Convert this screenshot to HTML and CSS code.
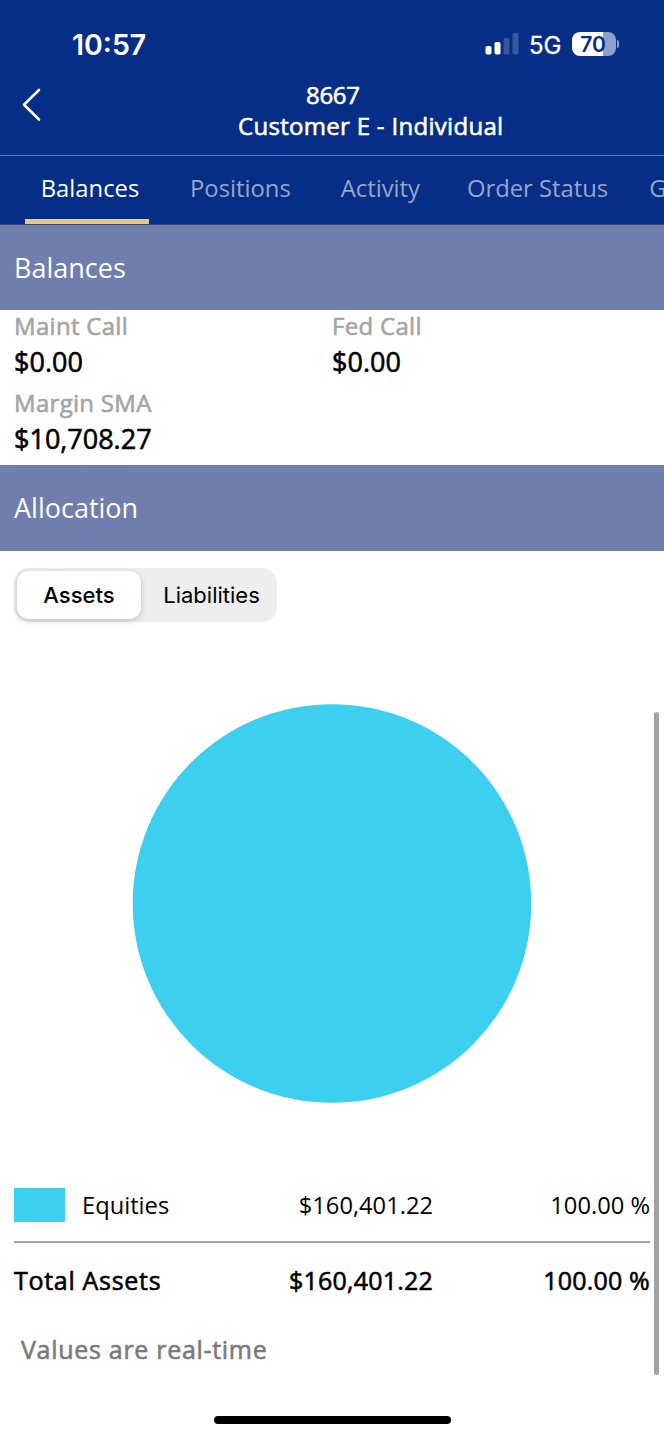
FILE: index.html
```
<!DOCTYPE html>
<html lang="en">
  <head>
    <meta charset="UTF-8" />
    <meta name="viewport" content="width=device-width, initial-scale=1.0" />
    <title>Account Balances</title>
    <link rel="stylesheet" href="styles.css">
  </head>
  <body>
    <div class="screen">
      <div class="status-bar">
        <span class="time">10:57</span>
        <div class="status-icons">
          <svg class="signal" width="34" height="22" viewBox="0 0 34 22" fill="#fff">
            <rect x="0.5" y="13" width="6" height="8.5" rx="1.8" />
            <rect x="9.5" y="9" width="6" height="12.5" rx="1.8" />
            <rect x="18.5" y="5" width="6" height="16.5" rx="1.8" opacity="0.2" />
            <rect x="27.5" y="0" width="6" height="21.5" rx="1.8" opacity="0.2" />
          </svg>
          <span class="network">5G</span>
          <div class="battery">
            <span class="battery-level">70</span>
          </div>
          <span class="battery-tip"></span>
        </div>
      </div>

      <header class="header">
        <svg class="back" width="20" height="34" viewBox="0 0 20 34" fill="none" stroke="#fff" stroke-width="2.6" stroke-linecap="round" stroke-linejoin="round">
          <path d="M17 2 L2 16.7 L17 31.5" />
        </svg>
        <div class="title">
          <div class="account">8667</div>
          <div class="customer">Customer E - Individual</div>
        </div>
      </header>

      <nav class="tabs">
        <a class="tab active">Balances</a>
        <a class="tab positions">Positions</a>
        <a class="tab activity">Activity</a>
        <a class="tab orders">Order Status</a>
        <a class="tab">G</a>
      </nav>

      <h2 class="section-title">Balances</h2>
      <div class="balances">
        <div class="balance">
          <div class="label">Maint Call</div>
          <div class="value">$0.00</div>
        </div>
        <div class="balance">
          <div class="label">Fed Call</div>
          <div class="value">$0.00</div>
        </div>
        <div class="balance">
          <div class="label">Margin SMA</div>
          <div class="value">$10,708.27</div>
        </div>
      </div>

      <h2 class="section-title allocation-title">Allocation</h2>
      <div class="allocation">
        <div class="segmented">
          <button class="segment selected">Assets</button>
          <button class="segment">Liabilities</button>
        </div>

        <svg class="chart" width="400" height="400" viewBox="0 0 400 400">
          <circle cx="200" cy="199.5" r="199.3" fill="#3dcff0" />
        </svg>

        <div class="row">
          <span class="name"><i class="swatch"></i>Equities</span>
          <span class="amount">$160,401.22</span>
          <span class="percent">100.00 %</span>
        </div>
        <div class="row total">
          <span class="name">Total Assets</span>
          <span class="amount">$160,401.22</span>
          <span class="percent">100.00 %</span>
        </div>
        <p class="note">Values are real-time</p>
      </div>

      <div class="scrollbar"></div>
      <div class="home-indicator"></div>
    </div>
  </body>
</html>
```
FILE: styles.css
```
* {
  margin: 0;
  padding: 0;
  box-sizing: border-box;
}

body {
  background: #fff;
  font-family: "Open Sans", sans-serif;
  color: #000;
}

.screen {
  position: relative;
  width: 664px;
  height: 1440px;
  overflow: hidden;
  display: flex;
  flex-direction: column;
  white-space: nowrap;
}

/* status bar */
.status-bar {
  height: 76px;
  padding: 12px 45px 0 72px;
  display: flex;
  justify-content: space-between;
  align-items: center;
  background: #062e87;
  color: #fff;
  font-family: Inter, sans-serif;
}

.time {
  font-size: 28.5px;
  font-weight: 600;
}

.status-icons {
  display: flex;
  align-items: center;
}

.network {
  margin-left: 10px;
  padding-top: 2px;
  width: 33px;
  font-size: 24px;
  font-weight: 400;
  -webkit-text-stroke: 0.3px #fff;
}

.battery {
  margin-left: 10px;
  width: 44px;
  height: 24px;
  border-radius: 8px;
  background: linear-gradient(to right, #fff 70%, #8d9fca 70%);
  text-align: center;
}

.battery-level {
  display: block;
  padding-right: 2px;
  line-height: 25px;
  font-size: 21px;
  font-weight: 600;
  color: #062e87;
}

.battery-tip {
  margin-left: 1px;
  width: 2px;
  height: 8px;
  border-radius: 0 3px 3px 0;
  background: #8d9fca;
}

/* header */
.header {
  height: 80px;
  padding: 3px 22px 0;
  display: flex;
  background: #062e87;
  border-bottom: 1px solid #6077b1;
  color: #fff;
}

.back {
  margin-top: 9px;
}

/* medium weight: regular face with a thin outline */
.title,
.label,
.value,
.total,
.note {
  font-weight: 400;
  -webkit-text-stroke: 0.6px currentColor;
}

.title {
  margin-left: 196px;
  font-size: 24px;
  letter-spacing: 0.3px;
  line-height: 31px;
}

.account {
  padding-left: 68px;
  letter-spacing: -0.3px;
}

/* tabs */
.tabs {
  height: 69px;
  padding-left: 25px;
  display: flex;
  background: #062e87;
  border-bottom: 1px solid #34466f;
  flex-shrink: 0;
}

.tab {
  flex-shrink: 0;
  padding-top: 15px;
  font-size: 23.8px;
  line-height: 34px;
  color: #98a5c9;
}

.tab.active {
  width: 124px;
  margin-right: 41px;
  padding-left: 6px;
  border-bottom: 5px solid #e9c77b;
  text-align: center;
  color: #fff;
}

.positions {
  margin-right: 50px;
}

.activity {
  margin-right: 47px;
}

.orders {
  margin-right: 41px;
}

/* sections */
.section-title {
  height: 85px;
  padding-left: 14px;
  background: #707eae;
  color: #fff;
  font-size: 27px;
  font-weight: 400;
  line-height: 85px;
}

.allocation-title {
  height: 86px;
  line-height: 86px;
}

.balances {
  height: 155px;
  padding: 0 14px;
  display: grid;
  grid-template-columns: 1fr 1fr;
  grid-auto-rows: 77px;
}

.label {
  font-size: 24px;
  letter-spacing: 0.3px;
  line-height: 31px;
  color: #a5a5a5;
}

.value {
  font-size: 27px;
  line-height: 41px;
}

/* allocation */
.allocation {
  padding: 17px 14px 0;
  display: flex;
  flex-direction: column;
}

.segmented {
  width: 263px;
  height: 54px;
  padding: 3px;
  display: flex;
  border-radius: 15px;
  background: #eee;
}

.segment {
  flex: 1;
  padding-left: 8px;
  border: none;
  border-radius: 12px;
  background: transparent;
  font-family: Inter, sans-serif;
  font-size: 22px;
  color: #000;
}

.segment.selected {
  flex: none;
  width: 124px;
  padding-left: 0;
  background: #fff;
  font-weight: 500;
  box-shadow: 0 2px 6px rgba(0, 0, 0, 0.2);
}

.chart {
  margin: 82px auto 0;
}

.row {
  margin-top: 67px;
  height: 72px;
  padding-bottom: 2px;
  display: grid;
  grid-template-columns: 210px 209px 1fr;
  align-items: center;
  border-bottom: 2px solid #a3a3a3;
  font-size: 23.7px;
}

.name {
  display: flex;
  align-items: center;
}

.swatch {
  width: 51px;
  height: 34px;
  margin-right: 17px;
  background: #3dcff0;
}

.amount,
.percent {
  text-align: right;
}

.row.total {
  margin-top: 0;
  height: 76px;
  border: none;
  font-size: 25px;
  letter-spacing: 0.2px;
}

.total .name {
  letter-spacing: 0.7px;
}

.note {
  padding: 13px 7px 0;
  font-size: 25px;
  letter-spacing: 0.7px;
  line-height: 34px;
  color: #7b7b7b;
}

/* system overlays */
.scrollbar {
  position: absolute;
  top: 712px;
  right: 5px;
  width: 5px;
  height: 663px;
  border-radius: 3px;
  background: #a2a2a2;
}

.home-indicator {
  position: absolute;
  left: 214px;
  bottom: 16px;
  width: 237px;
  height: 8px;
  border-radius: 4px;
  background: #000;
}
```
